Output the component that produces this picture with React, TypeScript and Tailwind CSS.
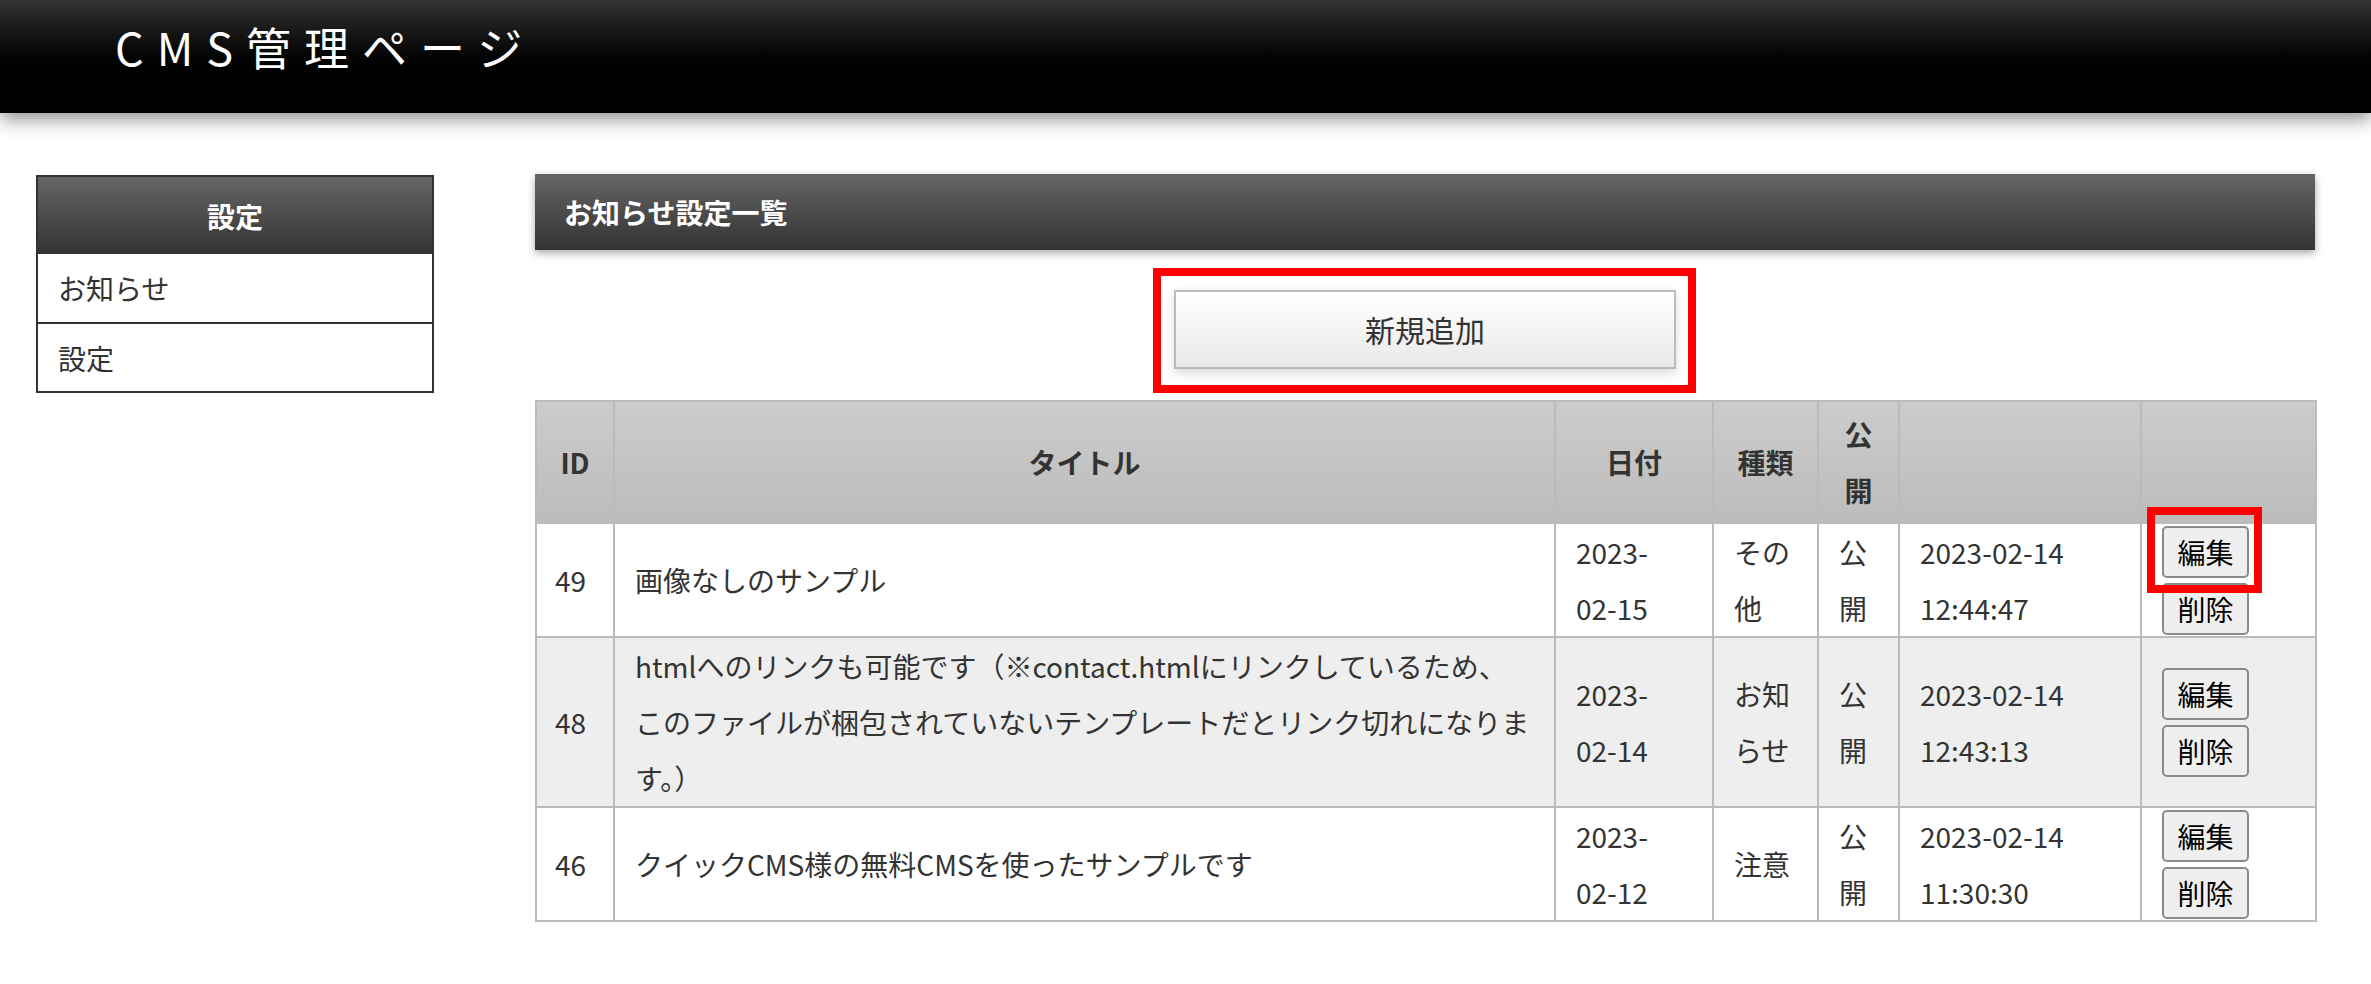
import React from 'react';

type Row = {
  id: number;
  title: string;
  date: [string, string];
  kind: string;
  pub: string;
  created: [string, string];
};

const rows: Row[] = [
  {
    id: 49,
    title: '画像なしのサンプル',
    date: ['2023-', '02-15'],
    kind: 'その他',
    pub: '公開',
    created: ['2023-02-14', '12:44:47'],
  },
  {
    id: 48,
    title:
      'htmlへのリンクも可能です（※contact.htmlにリンクしているため、このファイルが梱包されていないテンプレートだとリンク切れになります。）',
    date: ['2023-', '02-14'],
    kind: 'お知らせ',
    pub: '公開',
    created: ['2023-02-14', '12:43:13'],
  },
  {
    id: 46,
    title: 'クイックCMS様の無料CMSを使ったサンプルです',
    date: ['2023-', '02-12'],
    kind: '注意',
    pub: '公開',
    created: ['2023-02-14', '11:30:30'],
  },
];

function SmallButton({ label }: { label: string }) {
  return (
    <button className="block w-[87px] h-[52px] border-2 border-[#8a8a8a] rounded-[5px] bg-[#efefef] text-[28px] leading-none text-black">
      {label}
    </button>
  );
}

export default function App() {
  return (
    <div className="min-h-screen bg-white font-['Noto_Sans_CJK_JP','Noto_Sans',sans-serif] text-[#333]">
      {/* ヘッダー */}
      <header className="relative z-10 h-[113px] bg-linear-to-b from-[#353535] to-black to-[75%] shadow-[0_6px_18px_rgba(0,0,0,0.45)] pl-[115px] pt-[24px]">
        <h1 className="text-[45px] leading-none tracking-[13px] text-white font-normal">CMS管理ページ</h1>
      </header>

      <div className="flex items-start gap-[101px] pl-[36px] pr-[56px] pt-[61px]">
        {/* サイドメニュー */}
        <aside className="mt-[1px] w-[398px] shrink-0 border-2 border-[#333]">
          <div className="h-[77px] flex items-center justify-center bg-linear-to-b from-[#666] to-[#333] text-white text-[28px] font-bold">
            設定
          </div>
          <div className="h-[68px] flex items-center pl-[20px] text-[28px]">お知らせ</div>
          <div className="h-[69px] flex items-center pl-[20px] text-[28px] border-t-2 border-[#333]">設定</div>
        </aside>

        {/* メイン */}
        <main className="flex-1 min-w-0">
          <div className="h-[76px] flex items-center px-[29px] bg-linear-to-b from-[#666] to-[#333] shadow-[0_3px_8px_rgba(0,0,0,0.35)] text-white text-[28px] font-bold">
            お知らせ設定一覧
          </div>

          <div className="mt-[40px] flex justify-center">
            <div className="relative">
              <button className="w-[502px] h-[79px] border-2 border-[#bbb] bg-linear-to-b from-white to-[#e9e9e9] shadow-[0_4px_10px_rgba(0,0,0,0.15)] text-[30px] text-[#333]">
                新規追加
              </button>
              <div className="pointer-events-none absolute -top-[22px] -left-[21px] -right-[20px] -bottom-[24px] border-[8px] border-[#ff0000]" />
            </div>
          </div>

          <table className="mt-[31px] w-full table-fixed border-collapse border-2 border-[#bbb] text-[28px] leading-[56px]">
            <colgroup>
              <col className="w-[78px]" />
              <col className="w-[941px]" />
              <col className="w-[158px]" />
              <col className="w-[105px]" />
              <col className="w-[81px]" />
              <col className="w-[242px]" />
              <col className="w-[175px]" />
            </colgroup>
            <thead>
              <tr>
                {['ID', 'タイトル', '日付', '種類', '公開', '', ''].map((h, i) => (
                  <th
                    key={i}
                    className="border-2 border-[#bbb] bg-linear-to-b from-[#cccccc] to-[#bcbcbc] py-[4px] px-[20px] text-center font-bold text-[#333]"
                  >
                    {h}
                  </th>
                ))}
              </tr>
            </thead>
            <tbody>
              {rows.map((r, idx) => (
                <tr key={r.id} className={idx % 2 === 1 ? 'bg-[#eeeeee]' : 'bg-white'}>
                  <td className="border-2 border-[#bbb] px-[18px] py-0 align-middle">{r.id}</td>
                  <td className="border-2 border-[#bbb] px-[20px] py-0 align-middle">{r.title}</td>
                  <td className="border-2 border-[#bbb] px-[20px] py-0 align-middle whitespace-nowrap">
                    {r.date[0]}
                    <br />
                    {r.date[1]}
                  </td>
                  <td className="border-2 border-[#bbb] px-[20px] py-0 align-middle">{r.kind}</td>
                  <td className="border-2 border-[#bbb] px-[20px] py-0 align-middle">{r.pub}</td>
                  <td className="border-2 border-[#bbb] px-[20px] py-0 align-middle whitespace-nowrap">
                    {r.created[0]}
                    <br />
                    {r.created[1]}
                  </td>
                  <td className="border-2 border-[#bbb] px-[20px] py-0 align-middle">
                    <div className="flex flex-col gap-[5px]">
                      <div className="relative w-[87px]">
                        <SmallButton label="編集" />
                        {idx === 0 && (
                          <div className="pointer-events-none absolute z-10 -top-[19px] -left-[15px] -right-[13px] -bottom-[15px] border-[8px] border-[#ff0000]" />
                        )}
                      </div>
                      <SmallButton label="削除" />
                    </div>
                  </td>
                </tr>
              ))}
            </tbody>
          </table>
        </main>
      </div>
    </div>
  );
}
